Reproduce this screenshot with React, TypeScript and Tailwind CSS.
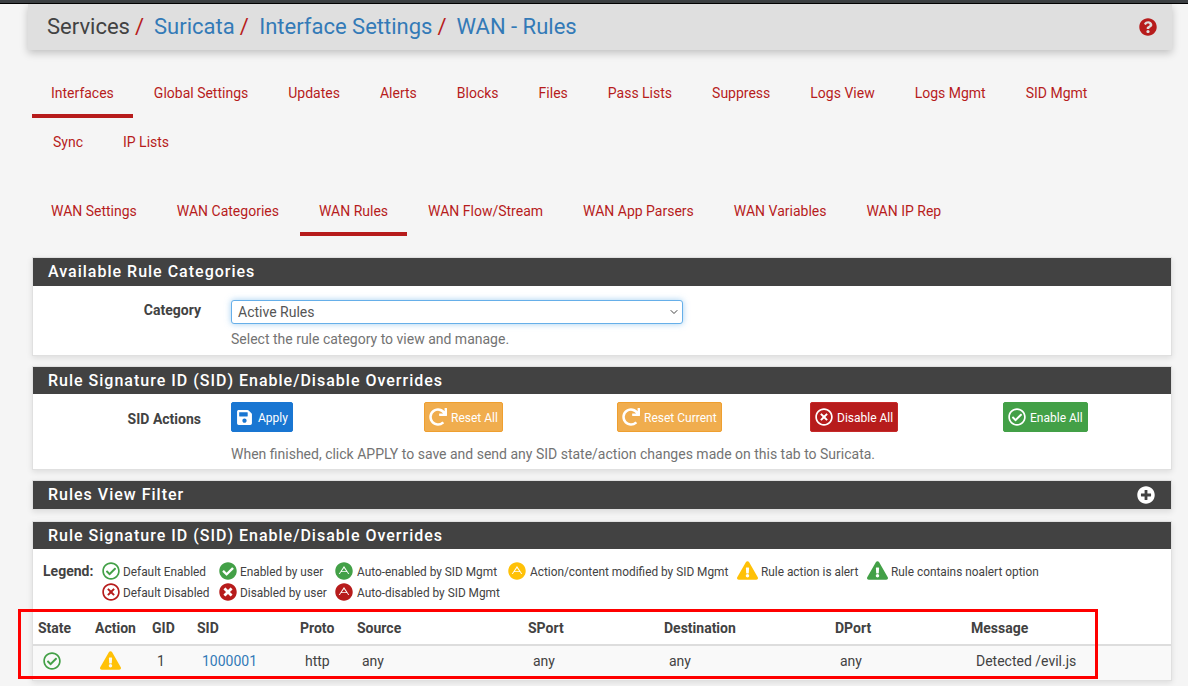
import {
  FaAdn,
  FaCheckCircle,
  FaExclamationTriangle,
  FaPlusCircle,
  FaQuestionCircle,
  FaRedo,
  FaRegCheckCircle,
  FaRegTimesCircle,
  FaSave,
  FaTimesCircle,
} from "react-icons/fa";
import { ChevronDown } from "lucide-react";
import type { ReactNode } from "react";

const TABS_ONE = ["Interfaces", "Global Settings", "Updates", "Alerts", "Blocks", "Files", "Pass Lists", "Suppress", "Logs View", "Logs Mgmt", "SID Mgmt", "Sync", "IP Lists"];
const TABS_TWO = ["WAN Settings", "WAN Categories", "WAN Rules", "WAN Flow/Stream", "WAN App Parsers", "WAN Variables", "WAN IP Rep"];

function Tabs({ items, active }: { items: string[]; active: string }) {
  return (
    <ul className="flex flex-wrap">
      {items.map((item, index) => (
        <li
          key={item}
          className={`h-[49px] px-[19px] pt-[14px] text-sm leading-[20px] text-[#b71c1c] ${index === 0 ? "" : "ml-[2px]"} ${
            item === active ? "border-b-4 border-[#b71c1c]" : ""
          }`}
        >
          {item}
        </li>
      ))}
    </ul>
  );
}

function Panel({ title, right, compact, children }: { title: string; right?: ReactNode; compact?: boolean; children?: ReactNode }) {
  return (
    <section className="bg-white border border-[#e0e0e0] shadow-[0_2px_6px_rgba(0,0,0,0.1)]">
      <h2
        className={`flex items-center justify-between bg-[#424242] pl-[15px] pr-[16px] text-base font-medium tracking-[1px] text-white ${
          compact ? "h-[27px]" : "h-[28px]"
        }`}
      >
        {title}
        {right}
      </h2>
      {children}
    </section>
  );
}

function ActionButton({ icon, label, className }: { icon: ReactNode; label: string; className: string }) {
  return (
    <button type="button" className={`flex h-[30px] items-center gap-[4px] rounded-[2px] border px-[4px] text-xs text-white ${className}`}>
      {icon}
      <span className="pt-px">{label}</span>
    </button>
  );
}

function LegendItem({ icon, label, iconWidth }: { icon: ReactNode; label: string; iconWidth: string }) {
  return (
    <div className="flex h-[21px] items-center text-[11.85px]">
      <span className={`flex shrink-0 pb-[2px] ${iconWidth}`}>{icon}</span>
      <span className="pt-[2px]">{label}</span>
    </div>
  );
}

const GREEN = "text-[#43a047]";
const RED = "text-[#b71c1c]";
const YELLOW = "text-[#ffc107]";

export default function App() {
  return (
    <div className="relative h-[686px] overflow-hidden bg-[#f5f5f5] font-['Roboto',sans-serif] text-[#424242]">
      <div className="h-[4px] border-b border-black bg-[#3c4043]" />

      <div className="pl-[28px] pr-[16px]">
        <div className="flex h-[46px] items-center justify-between bg-[#dfdfdf] pl-[19px] pr-[15px] shadow-[0_3px_8px_rgba(0,0,0,0.22)]">
          <div className="flex items-center text-[22px] leading-[30px]">
            <span>Services</span>
            <span className="ml-[5px] mr-[10px] text-[#b71c1c]">/</span>
            <span className="text-[#337ab7]">Suricata</span>
            <span className="ml-[5px] mr-[10.5px] text-[#b71c1c]">/</span>
            <span className="text-[#337ab7]">Interface Settings</span>
            <span className="ml-[5px] mr-[10px] text-[#b71c1c]">/</span>
            <span className="text-[#337ab7]">WAN - Rules</span>
          </div>
          <FaQuestionCircle className="text-[#b71c1c]" size={18} />
        </div>
      </div>

      <div className="ml-[32px] mr-[16px]">
        <div className="pt-[19px]">
          <Tabs items={TABS_ONE} active="Interfaces" />
        </div>
        <div className="pt-[20px]">
          <Tabs items={TABS_TWO} active="WAN Rules" />
        </div>

        <div className="mt-[21px] flex flex-col gap-[10px]">
          <Panel title="Available Rule Categories">
            <div className="flex h-[69px] pt-[14px]">
              <label className="w-[168px] shrink-0 text-right text-sm font-bold leading-[20px]">Category</label>
              <div className="ml-[30px] w-[452px]">
                <div className="relative">
                  <select className="h-[24px] w-full appearance-none rounded-[3px] border border-[#66afe9] bg-white pl-[6px] text-sm text-[#555] shadow-[0_0_6px_rgba(102,175,233,0.6)] outline-none">
                    <option>Active Rules</option>
                  </select>
                  <ChevronDown size={12} className="pointer-events-none absolute right-[3px] top-[6px] text-[#444]" />
                </div>
                <p className="mt-[5px] text-sm leading-[20px] text-[#737373]">Select the rule category to view and manage.</p>
              </div>
            </div>
          </Panel>

          <Panel compact title="Rule Signature ID (SID) Enable/Disable Overrides">
            <div className="flex h-[75px] pt-[8px]">
              <label className="w-[168px] shrink-0 pt-[7px] text-right text-sm font-bold leading-[20px]">SID Actions</label>
              <div className="ml-[30px]">
                <div className="grid grid-cols-[193px_193px_193px_193px_193px] justify-items-start">
                  <ActionButton icon={<FaSave size={17} className="mr-px" />} label="Apply" className="border-[#1976d2] bg-[#1976d2]" />
                  <ActionButton icon={<FaRedo size={18} />} label="Reset All" className="border-[#ef9f2f] bg-[#f0ad4e]" />
                  <ActionButton icon={<FaRedo size={18} />} label="Reset Current" className="border-[#ef9f2f] bg-[#f0ad4e]" />
                  <ActionButton icon={<FaRegTimesCircle size={18} />} label="Disable All" className="border-[#c62828] bg-[#b71c1c]" />
                  <ActionButton icon={<FaRegCheckCircle size={18} />} label="Enable All" className="border-[#43a047] bg-[#43a047]" />
                </div>
                <p className="mt-[12px] text-sm leading-[20px] text-[#737373]">
                  When finished, click APPLY to save and send any SID state/action changes made on this tab to Suricata.
                </p>
              </div>
            </div>
          </Panel>

          <Panel title="Rules View Filter" right={<FaPlusCircle size={18} />} />

          <div className="mt-px">
            <Panel compact title="Rule Signature ID (SID) Enable/Disable Overrides">
              <div className="flex pl-[10px] pt-[12px]">
                <span className="w-[59px] shrink-0 text-sm font-bold leading-[21px]">Legend:</span>
                <div className="grid grid-cols-[117px_116px_173px_229px_130px_auto]">
                  <LegendItem iconWidth="w-[21px]" icon={<FaRegCheckCircle size={18} className={GREEN} />} label="Default Enabled" />
                  <LegendItem iconWidth="w-[21px]" icon={<FaCheckCircle size={18} className={GREEN} />} label="Enabled by user" />
                  <LegendItem iconWidth="w-[22px]" icon={<FaAdn size={18} className={GREEN} />} label="Auto-enabled by SID Mgmt" />
                  <LegendItem iconWidth="w-[22px]" icon={<FaAdn size={18} className={YELLOW} />} label="Action/content modified by SID Mgmt" />
                  <LegendItem iconWidth="w-[24px]" icon={<FaExclamationTriangle size={21} className={YELLOW} />} label="Rule action is alert" />
                  <LegendItem iconWidth="w-[24px]" icon={<FaExclamationTriangle size={21} className={GREEN} />} label="Rule contains noalert option" />
                  <LegendItem iconWidth="w-[21px]" icon={<FaRegTimesCircle size={18} className={RED} />} label="Default Disabled" />
                  <LegendItem iconWidth="w-[21px]" icon={<FaTimesCircle size={18} className={RED} />} label="Disabled by user" />
                  <LegendItem iconWidth="w-[22px]" icon={<FaAdn size={18} className={RED} />} label="Auto-disabled by SID Mgmt" />
                </div>
              </div>
              <table className="mt-[8px] w-full table-fixed text-sm">
                <thead>
                  <tr className="h-[34px] border-b-2 border-[#ddd] text-left font-bold">
                    <th className="w-[57px] pl-[5px]">State</th>
                    <th className="w-[57px] pl-[5px]">Action</th>
                    <th className="w-[45px] pl-[5px]">GID</th>
                    <th className="w-[103px] pl-[5px]">SID</th>
                    <th className="w-[57px] pl-[5px]">Proto</th>
                    <th className="w-[171px] pl-[5px]">Source</th>
                    <th className="w-[136px] pl-[5px]">SPort</th>
                    <th className="w-[171px] pl-[5px]">Destination</th>
                    <th className="w-[136px] pl-[5px]">DPort</th>
                    <th className="pl-[5px]">Message</th>
                  </tr>
                </thead>
                <tbody>
                  <tr className="h-[35px] bg-[#f9f9f9]">
                    <td className="pb-[5px] pl-[10px]"><FaRegCheckCircle size={18} className={GREEN} /></td>
                    <td className="pb-[5px] pl-[10px]"><FaExclamationTriangle size={21} className={YELLOW} /></td>
                    <td className="pb-[5px] pl-[10px]">1</td>
                    <td className="pb-[5px] pl-[10px] text-[#337ab7]">1000001</td>
                    <td className="pb-[5px] pl-[10px]">http</td>
                    <td className="pb-[5px] pl-[10px]">any</td>
                    <td className="pb-[5px] pl-[10px]">any</td>
                    <td className="pb-[5px] pl-[10px]">any</td>
                    <td className="pb-[5px] pl-[10px]">any</td>
                    <td className="pb-[5px] pl-[10px]">Detected /evil.js</td>
                  </tr>
                </tbody>
              </table>
            </Panel>
          </div>
        </div>
      </div>

      {/* annotation drawn over the table */}
      <div className="pointer-events-none absolute left-[18px] top-[609px] h-[70px] w-[1080px] border-[3px] border-[#f00]" />
    </div>
  );
}
